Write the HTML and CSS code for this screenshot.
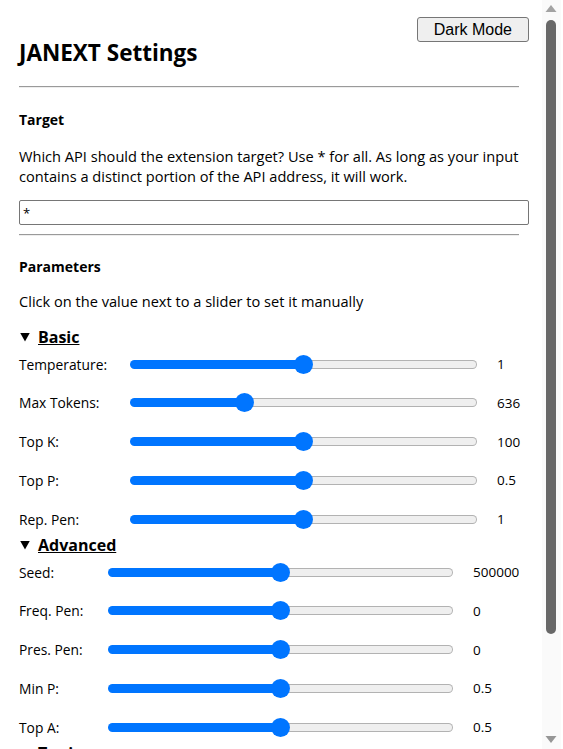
FILE: index.html
```html
<!DOCTYPE html>
<html lang="en">
<head>
<meta charset="utf-8">
<title>JANEXT Settings</title>
<link rel="stylesheet" href="styles.css">
</head>
<body>
<main class="page">
  <div class="topbar"><button class="mode-btn" type="button">Dark Mode</button></div>
  <h1 class="title">JANEXT Settings</h1>
  <hr class="rule">
  <h2 class="section-title section-title--target">Target</h2>
  <p class="text">Which API should the extension target? Use * for all. As long as your input contains a distinct portion of the API address, it will work.</p>
  <input class="target-input" type="text" value="*">
  <hr class="rule rule--after-input">
  <h2 class="section-title section-title--params">Parameters</h2>
  <p class="text text--hint">Click on the value next to a slider to set it manually</p>

  <details class="group" open>
    <summary class="group-title">Basic</summary>
    <div class="rows rows--basic">
      <label class="row-label">Temperature:</label>
      <input class="slider" type="range" min="0" max="2" step="0.01" value="1" style="--f:0.5">
      <span class="row-value">1</span>

      <label class="row-label">Max Tokens:</label>
      <input class="slider" type="range" min="0" max="2000" value="636" style="--f:0.318">
      <span class="row-value">636</span>

      <label class="row-label">Top K:</label>
      <input class="slider" type="range" min="0" max="200" value="100" style="--f:0.5">
      <span class="row-value">100</span>

      <label class="row-label">Top P:</label>
      <input class="slider" type="range" min="0" max="1" step="0.01" value="0.5" style="--f:0.5">
      <span class="row-value">0.5</span>

      <label class="row-label">Rep. Pen:</label>
      <input class="slider" type="range" min="0" max="2" step="0.01" value="1" style="--f:0.5">
      <span class="row-value">1</span>
    </div>
  </details>

  <details class="group" open>
    <summary class="group-title">Advanced</summary>
    <div class="rows rows--advanced">
      <label class="row-label">Seed:</label>
      <input class="slider" type="range" min="0" max="1000000" value="500000" style="--f:0.5">
      <span class="row-value">500000</span>

      <label class="row-label">Freq. Pen:</label>
      <input class="slider" type="range" min="-2" max="2" step="0.01" value="0" style="--f:0.5">
      <span class="row-value">0</span>

      <label class="row-label">Pres. Pen:</label>
      <input class="slider" type="range" min="-2" max="2" step="0.01" value="0" style="--f:0.5">
      <span class="row-value">0</span>

      <label class="row-label">Min P:</label>
      <input class="slider" type="range" min="0" max="1" step="0.01" value="0.5" style="--f:0.5">
      <span class="row-value">0.5</span>

      <label class="row-label">Top A:</label>
      <input class="slider" type="range" min="0" max="1" step="0.01" value="0.5" style="--f:0.5">
      <span class="row-value">0.5</span>
    </div>
  </details>

  <details class="group">
    <summary class="group-title">Tuning</summary>
  </details>
</main>

<div class="scrollbar" aria-hidden="true">
  <svg class="scrollbar-arrow scrollbar-arrow--up" width="19" height="16" viewBox="0 0 19 16"><polygon points="3.5,12 14.5,12 9,5" fill="#a3a3a3"/></svg>
  <div class="scrollbar-track"><div class="scrollbar-thumb"></div></div>
  <svg class="scrollbar-arrow scrollbar-arrow--down" width="19" height="16" viewBox="0 0 19 16"><polygon points="3.5,3 14.5,3 9,10" fill="#969696"/></svg>
</div>
</body>
</html>
```

FILE: styles.css
```css
html, body {
  margin: 0;
  height: 749px;
  overflow: hidden;
  background: #ffffff;
}

body {
  font-family: "Open Sans", "Noto Sans", sans-serif;
  font-size: 13.8px;
  color: #000000;
}

.page {
  width: 500px;
  padding: 17px 0 0 19px;
}

.topbar {
  width: 510px;
  display: flex;
  justify-content: flex-end;
}

.mode-btn {
  height: 25px;
  padding: 0 16px;
  font-family: "Liberation Sans", Arial, sans-serif;
  font-size: 16px;
  color: #000;
  background: #efefef;
  border: 1px solid #767676;
  border-radius: 3px;
}

.title {
  margin: -2px 0 0;
  font-size: 22.5px;
  line-height: 26px;
  font-weight: 700;
}

.rule {
  margin: 20px 0 0;
  border: 0;
  border-top: 1px solid #9a9a9a;
  border-bottom: 1px solid #eeeeee;
  height: 0;
}

.rule--after-input {
  margin-top: 9px;
}

.section-title {
  margin: 22px 0 0;
  font-size: 14px;
  line-height: 20px;
  font-weight: 700;
}

.section-title--params {
  margin-top: 21px;
}

.text {
  margin: 16px 0 0;
  font-size: 14.6px;
  line-height: 20px;
}

.text--hint {
  margin-top: 14px;
}

.target-input {
  display: block;
  box-sizing: border-box;
  width: 510px;
  height: 25px;
  margin: 14px 0 0;
  padding: 0 3px;
  font-family: "Open Sans", "Noto Sans", sans-serif;
  font-size: 13px;
  border: 1px solid #767676;
  border-radius: 2px;
}

.group {
  margin: 0;
}

.group:first-of-type {
  margin-top: 14px;
}

.group-title {
  display: flex;
  align-items: center;
  list-style: none;
  font-size: 16px;
  line-height: 24px;
  font-weight: 700;
  text-decoration: underline;
  cursor: pointer;
}

.group-title::-webkit-details-marker {
  display: none;
}

.group-title::before {
  content: "";
  width: 10px;
  height: 9px;
  margin: 0 8px 0 1px;
  background: #000;
  clip-path: polygon(0 0, 100% 0, 50% 100%);
}

.rows {
  display: grid;
  grid-auto-rows: 22px;
  row-gap: 16.75px;
  align-items: center;
  margin: 4px 0 3px;
}

.rows--basic {
  grid-template-columns: 111px 347px 1fr;
}

.rows--advanced {
  grid-template-columns: 89px 345px 1fr;
}

.row-label {
  white-space: nowrap;
}

.row-value {
  padding-left: 20px;
  font-size: 13.5px;
}

.slider {
  -webkit-appearance: none;
  appearance: none;
  width: 100%;
  height: 20px;
  margin: 0;
  background: transparent;
}

.slider::-webkit-slider-runnable-track {
  height: 9px;
  box-sizing: border-box;
  border: 1px solid transparent;
  border-radius: 5px;
  background:
    linear-gradient(to right, #0075ff calc(9.5px + var(--f) * (100% - 19px)), #efefef calc(9.5px + var(--f) * (100% - 19px))) padding-box,
    linear-gradient(to right, #0075ff calc(9.5px + var(--f) * (100% - 19px)), #b2b2b2 calc(9.5px + var(--f) * (100% - 19px))) border-box;
}

.slider::-webkit-slider-thumb {
  -webkit-appearance: none;
  appearance: none;
  width: 19px;
  height: 19px;
  margin-top: -6px;
  border: 0;
  border-radius: 50%;
  background: #0075ff;
}

.scrollbar {
  position: fixed;
  top: 0;
  left: 542px;
  width: 19px;
  height: 749px;
  background: #fafafa;
  display: flex;
  flex-direction: column;
}

.scrollbar-arrow {
  display: block;
  flex: none;
}

.scrollbar-track {
  flex: 1;
  padding-top: 4px;
}

.scrollbar-thumb {
  width: 10px;
  height: 614px;
  margin-left: 4px;
  border-radius: 5px;
  background: #686868;
}
```
